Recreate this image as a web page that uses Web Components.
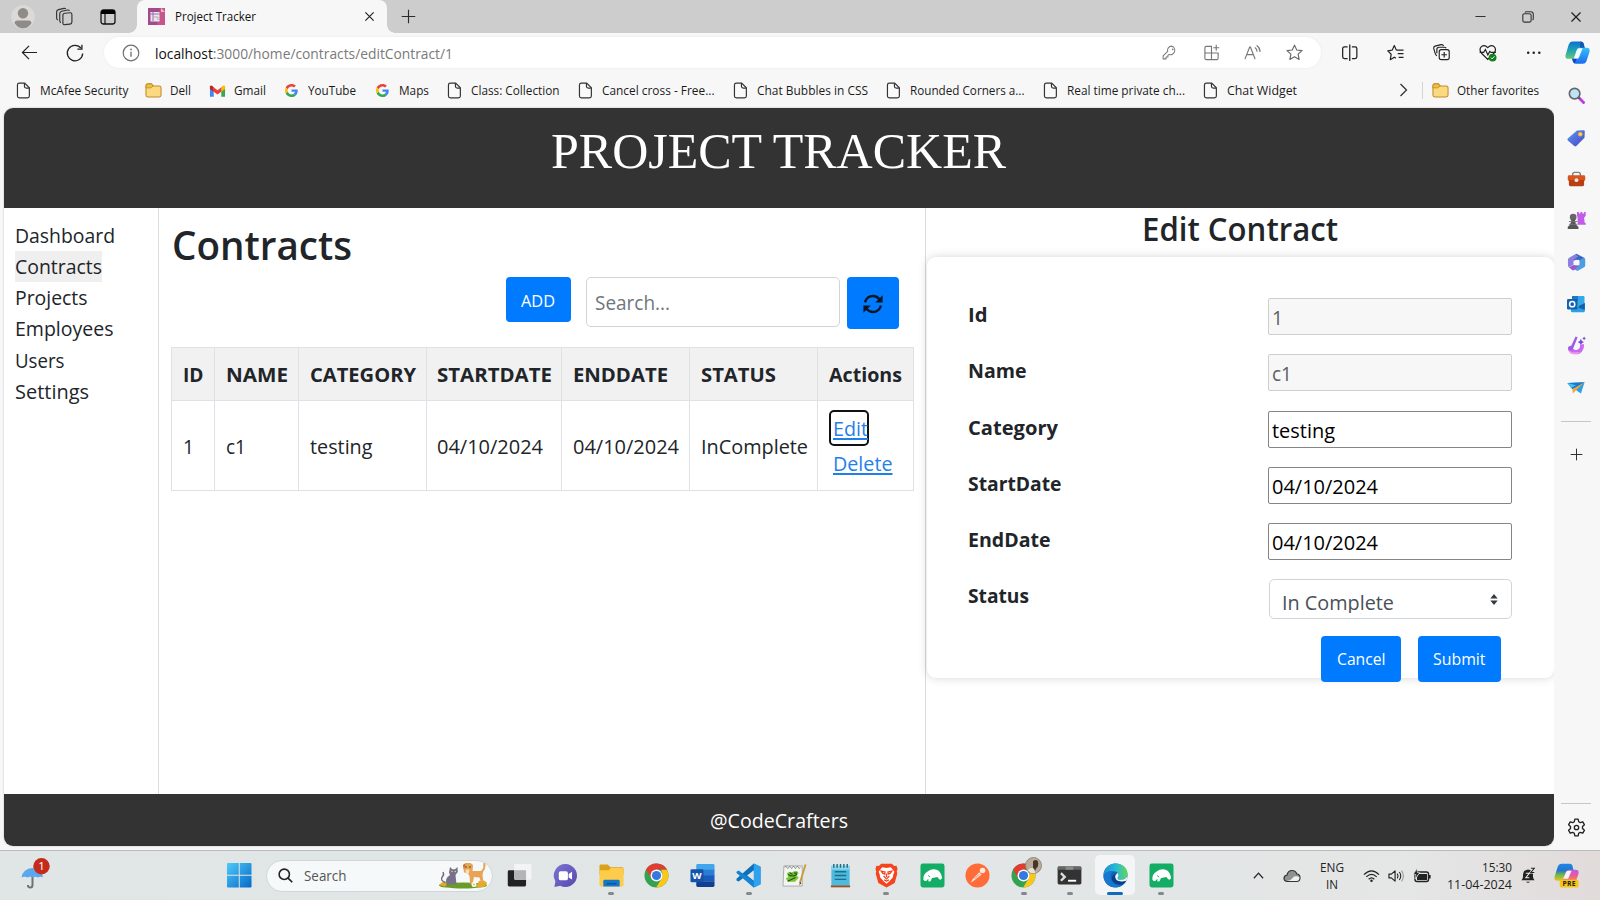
<!DOCTYPE html>
<html lang="en">
<head>
<meta charset="utf-8">
<title>Project Tracker</title>
<style>
html,body{margin:0;padding:0}
body{width:1600px;height:900px;overflow:hidden;background:#f7f7f7;font-family:"Open Sans","Noto Sans",sans-serif;color:#212529}
</style>
</head>
<body>
<desktop-window></desktop-window>
<script>
const ICONS={
avatar:['0 0 24 24','<circle cx="12" cy="12" r="11.8" fill="#dcdad7"/><circle cx="12" cy="8.3" r="5.2" fill="#8f8b88"/><path d="M3.6 18.2q0-2.6 2.8-2.6h11.2q2.8 0 2.8 2.6-3 5-8.400 5t-8.400-5z" fill="#8f8b88"/>'],
stack:['0 0 20 20','<g fill="none" stroke="#333" stroke-width="1.200" stroke-linejoin="round"><rect x="8.300" y="6.500" width="9.500" height="12" rx="2" transform="skewY(-6) translate(0 1.200)"/><path d="M6.200 16.500Q5 16 5 14.500V7q0-2 2-2.500l6.500-1.300q1.300-.2 1.800.8"/><path d="M3 13.800Q1.700 13 1.700 11.500V5.300q0-2 2-2.500L9.500 1.500q1.300-.2 1.900.6"/></g>'],
panes:['0 0 18 18','<rect x="2" y="2" width="14" height="14" rx="2.500" fill="none" stroke="#111" stroke-width="1.300"/><path d="M2 4.500Q2 2 4.500 2h9Q16 2 16 4.500V6H2z" fill="#000"/><path d="M6 6v10" stroke="#111" stroke-width="1.200"/>'],
favicon:['0 0 17 17','<path d="M0 0h13l4 4v13H0z" fill="#a24a8c"/><path d="M12 0h5v17H9z" fill="#c8558a"/><path d="M13 0v4h4z" fill="#f0b5c8"/><rect x="2.500" y="4" width="9" height="9.500" fill="#ece4ee"/><path d="M2.500 6h9M5 4v9" stroke="#8b77a0"/><path d="M6 9h4v3" stroke="#aaa6ba" fill="none"/>'],
close:['0 0 12 12','<path d="M1.500 1.500l9 9M10.500 1.500l-9 9" stroke="#222" stroke-width="1.300" fill="none"/>'],
plus:['0 0 16 16','<path d="M8 .8v14.400M.8 8h14.400" stroke="#2b2b2b" stroke-width="1.200"/>'],
min:['0 0 12 12','<path d="M.5 6h11" stroke="#333" stroke-width="1.100"/>'],
restore:['0 0 12 12','<rect x=".8" y="2.800" width="8.300" height="8.300" rx="1.500" fill="none" stroke="#333" stroke-width="1.100"/><path d="M3 1.500Q3.500.7 4.500.7h4.200q2.600 0 2.600 2.600v4.200q0 1-.8 1.500" fill="none" stroke="#333" stroke-width="1.100"/>'],
back:['0 0 18 18','<path d="M17 9H1.500M8.500 2 1.500 9l7 7" fill="none" stroke="#222" stroke-width="1.300"/>'],
reload:['0 0 18 18','<path d="M16.700 9.500A7.700 7.700 0 1 1 15 4.200" fill="none" stroke="#222" stroke-width="1.300"/><path d="M15.900.8v4.400h-4.500" fill="none" stroke="#222" stroke-width="1.300"/>'],
info:['0 0 18 18','<circle cx="9" cy="9" r="7.800" fill="none" stroke="#6f6f6f" stroke-width="1.200"/><path d="M9 7.700v5" stroke="#6f6f6f" stroke-width="1.300"/><circle cx="9" cy="5.400" r=".9" fill="#6f6f6f"/>'],
key:['0 0 16 16','<path d="M10.300 1.200a4.500 4.500 0 0 0-4.300 5.700L1.200 11.700v3.100h3.100v-2h2v-2l1.200-.6a4.600 4.600 0 1 0 2.800-9z" fill="none" stroke="#7d7d7d" stroke-width="1.150" stroke-linejoin="round"/><circle cx="11.400" cy="4.600" r="1" fill="#7d7d7d"/>'],
apps:['0 0 18 18','<g fill="none" stroke="#777" stroke-width="1.200"><path d="M9.500 2.500H3.500Q2 2.500 2 4v11q0 1.500 1.500 1.500h11q1.500 0 1.500-1.500V9.500H2M9 2.500v14M14 .8v6.400M10.800 4h6.400"/></g>'],
aloud:['0 0 18 18','<g fill="none" stroke="#777" stroke-width="1.250" stroke-linecap="round"><path d="M1.200 15.500 6 3.200h.8l4.800 12.300M3 11.200h6.800"/><path d="M11.800 4q1.800 1.300 2 3.700M13.800 1.800q3 2 3.200 6"/></g>'],
star:['0 0 18 18','<path d="M9 1.200l2.350 5.100 5.600.7-4.150 3.800 1.100 5.500L9 13.600l-4.900 2.700 1.100-5.500L1.050 7l5.600-.7z" fill="none" stroke="#666" stroke-width="1.200" stroke-linejoin="round"/>'],
split:['0 0 18 18','<g fill="none" stroke="#222" stroke-width="1.300"><path d="M6.800 3H3.500Q1.700 3 1.700 4.800v8.400Q1.700 15 3.500 15h3.300M11.200 3h3.300q1.800 0 1.800 1.800v8.400q0 1.800-1.800 1.800h-3.300M9 .6v16.800"/></g>'],
favs:['0 0 18 18','<g fill="none" stroke="#222" stroke-width="1.250" stroke-linejoin="round"><path d="M9.600 6.300 7.500 1.600 5.400 6.300.8 7l3.500 3.500-.9 5.600 4.100-2.500 1.700.9M9.600 6.300H17M11 10h6M12 13.700h5"/></g>'],
coll:['0 0 18 18','<g fill="none" stroke="#222" stroke-width="1.250"><rect x="6.800" y="6.200" width="10.900" height="10.900" rx="2.300"/><path d="M12.200 8.700v6M9.200 11.700h6"/><path d="M4.300 12.800Q3 12.300 2.500 10.500L.8 5Q.3 3 2.200 2.300L8.800.7q2-.4 2.700 1.500M4.200 10V6q0-2.500 2.500-2.500h5.500q1.600 0 2.100 1.200"/></g>'],
heart:['0 0 18 18','<path d="M2.600 9.500Q-.3 5.800 2.200 3 5.500.2 9 3.800 12.500.2 15.800 3q2.500 2.800-.4 6.500L9 15.800z" fill="none" stroke="#222" stroke-width="1.200"/><path d="M.6 8.600h4.200l1.800-3 2.500 5.600 2-3.600 1.300 1h5" fill="#f7f7f7" stroke="#222" stroke-width="1.200"/><circle cx="14" cy="14" r="4" fill="#14801a"/><path d="M12.200 14l1.300 1.300 2.400-2.600" fill="none" stroke="#fff" stroke-width="1"/>'],
dots:['0 0 18 18','<g fill="#222"><circle cx="3.300" cy="9" r="1.300"/><circle cx="9" cy="9" r="1.300"/><circle cx="14.700" cy="9" r="1.300"/></g>'],
copilot:['0 0 26 26','<defs><linearGradient id="a" x1="0" y1="0" x2="0" y2="1"><stop offset="0" stop-color="#0f6fd0"/><stop offset=".45" stop-color="#1a9fb8"/><stop offset="1" stop-color="#5ecb78"/></linearGradient><linearGradient id="b" x1="0" y1="0" x2="0" y2="1"><stop offset="0" stop-color="#35c0f5"/><stop offset="1" stop-color="#1a6bf0"/></linearGradient></defs><path d="M8 1.500h8.500q2 0 2.700 2L20.500 8h-5q-2.300 0-3 2.400L10.400 17q-.8 2.600-3 2.600H3.500Q-.2 19.600.6 15.500L3.800 5Q5 1.500 8 1.500z" fill="url(#a)"/><path d="M15.500 8h7q3.900 0 3 4.300L22.300 22q-1 2.700-4 2.700h-7q-2.300 0-2.900-2l-1-3.100q2.300 0 3-2.600L12.500 10.400Q13.200 8 15.500 8z" fill="url(#b)"/><path d="M14.700 8.500h3.600l-3.600 9.300q-.5 1.600-2 1.600H9l3.300-9q.7-1.900 2.400-1.900z" fill="#f4fbff"/><path d="M16 1.500q2.500 0 3.200 2L20.500 8h-5z" fill="#1257b8"/><path d="M7.400 19.600h4.800l-2 4.800q-1.400-.3-1.800-1.700z" fill="#1646b8"/>'],
copilotPre:['0 0 26 26','<defs><linearGradient id="a" x1="0" y1="0" x2="0" y2="1"><stop offset="0" stop-color="#1c87e8"/><stop offset=".4" stop-color="#2675c8"/><stop offset=".65" stop-color="#6eb94e"/><stop offset="1" stop-color="#e8c21c"/></linearGradient><linearGradient id="b" x1="0" y1="0" x2="0" y2="1"><stop offset="0" stop-color="#b45ce8"/><stop offset=".5" stop-color="#ec5a9a"/><stop offset="1" stop-color="#f58a3c"/></linearGradient></defs><path d="M8 .8h8.500q2 0 2.700 2l1 4.500h-5L12 17q-.8 1.500-3 1.500H3.500Q-.2 18.500.6 14.400L3.800 4.200Q5 .8 8 .8z" fill="url(#a)"/><path d="M15.500 7h7q3.900 0 3 4.300L22.800 19H9l3.500-9.500Q13.200 7 15.500 7z" fill="url(#b)"/><path d="M14.700 8h3.600l-3.600 8.500H9.500l3-7Q13.200 8 14.700 8z" fill="#f6f3fb"/><rect x="6" y="17.300" width="19.500" height="8.200" rx="1.500" fill="#f8c514"/><text x="15.800" y="24" font-size="7" font-weight="700" font-family="Open Sans" text-anchor="middle" fill="#222" letter-spacing=".3">PRE</text>'],
doc:['0 0 16 18','<path d="M3.600 1.200h5.600l5 5v8.700q0 2-2 2H3.600q-2 0-2-2V3.200q0-2 2-2z" fill="#fafafa" stroke="#333" stroke-width="1.250"/><path d="M9 1.400v3q0 2 2 2h3" fill="none" stroke="#333" stroke-width="1.250"/>'],
folder:['0 0 18 18','<path d="M1 4Q1 2 3 2h3.700l2 2.200H15q2 0 2 2v7.600q0 2-2 2H3q-2 0-2-2z" fill="#fbd97e" stroke="#bf8d28" stroke-width="1.100"/><path d="M1 6.200h5.200l2.500-2L6.700 2H3Q1 2 1 4z" fill="#f3bd3d" stroke="#bf8d28" stroke-width=".9"/>'],
gmail:['0 0 18 18','<path d="M1 4.500V15q0 .7.800.7H5V8z" fill="#4285f4"/><path d="M17 4.500V15q0 .7-.8.700H13V8z" fill="#34a853"/><path d="M1 4.800v2.500l4 3V5.500L3.700 4.300Q1.600 2.900 1 4.800z" fill="#c5221f"/><path d="M17 4.800v2.500l-4 3V5.500l1.300-1.200q2.100-1.400 2.700.5z" fill="#fbbc04"/><path d="M5 5.500l4 3.200 4-3.200v4.800l-4 3-4-3z" fill="#ea4335"/>'],
google:['0 0 48 48','<path fill="#EA4335" d="M24 9.500c3.540 0 6.710 1.220 9.210 3.600l6.850-6.850C35.900 2.380 30.470 0 24 0 14.620 0 6.510 5.380 2.560 13.220l7.980 6.190C12.430 13.720 17.740 9.500 24 9.500z"/><path fill="#4285F4" d="M46.980 24.550c0-1.570-.15-3.090-.38-4.550H24v9.020h12.940c-.58 2.960-2.260 5.480-4.780 7.180l7.730 6c4.510-4.180 7.090-10.360 7.090-17.650z"/><path fill="#FBBC05" d="M10.530 28.590c-.48-1.450-.76-2.990-.76-4.590s.27-3.140.76-4.590l-7.980-6.190C.92 16.460 0 20.120 0 24c0 3.880.92 7.540 2.560 10.780l7.970-6.190z"/><path fill="#34A853" d="M24 48c6.480 0 11.930-2.130 15.890-5.810l-7.730-6c-2.150 1.450-4.920 2.300-8.160 2.300-6.260 0-11.570-4.220-13.470-9.910l-7.980 6.190C6.510 42.620 14.620 48 24 48z"/>'],
chev:['0 0 14 14','<path d="M4.500 1l6 6-6 6" fill="none" stroke="#333" stroke-width="1.300"/>'],
up:['0 0 12 12','<path d="M1 9l5-5.500L11 9" fill="none" stroke="#222" stroke-width="1.300"/>'],
mag:['0 0 18 18','<path d="M11.500 11.500l5 5" stroke="#c03ce0" stroke-width="3" stroke-linecap="round"/><path d="M10 10l2.300 2.300" stroke="#555" stroke-width="2"/><circle cx="7" cy="7" r="5.600" fill="#bfe3f6" stroke="#666" stroke-width="1.700"/>'],
tag:['0 0 18 18','<defs><linearGradient id="t" x1="0" y1="0" x2="1" y2="1"><stop offset="0" stop-color="#5f94f5"/><stop offset="1" stop-color="#4547c4"/></linearGradient></defs><path d="M10 1.500l6.500-.3q1.300 0 1.300 1.300l-.3 6.300-8.200 8.200q-1 .9-2 0L.8 11.500q-.9-1 0-2z" fill="url(#t)"/><circle cx="13.300" cy="5.200" r="2" fill="#f6d84e" stroke="#e2a72c" stroke-width=".7"/>'],
case:['0 0 20 18','<path d="M6 6V4q0-2 2-2h4q2 0 2 2v2" fill="none" stroke="#7a7f84" stroke-width="1.500"/><rect x=".8" y="5" width="18.400" height="6" rx="1.500" fill="#d9541e"/><path d="M2 10h16v5q0 1.500-1.500 1.500h-13Q2 16.500 2 15z" fill="#b83f12"/><circle cx="10" cy="10.200" r="2" fill="#e8e8e8"/>'],
chess:['0 0 20 20','<circle cx="6.500" cy="6.500" r="3.500" fill="#666"/><path d="M4.700 9h3.600l1.200 5.500 2.500 2V19H.8v-2.500l2.600-2z" fill="#555"/><path d="M2 11h9M2 14h9" stroke="#777"/><path d="M10.500 1h2v1.500h1.700V1h2v1.500H18V1h1.700v4l-1.700 2 .5 5 1.200 1v1.500h-8.500V6.500l-.7-1.500z" fill="#c35be8"/>'],
m365:['0 0 20 20','<path d="M10 .8 18 5v5.500l-6-3.500-4 1.500L2.200 5.500z" fill="#3768c8"/><path d="M2 5.300 8.500 1.500 12 3.500 7 7v5L2 15q-1-.6-1-2V7q0-1.200 1-1.700z" fill="#8b7fe0"/><path d="M18 5q1.200.6 1.200 2v6q0 1.400-1.200 2l-7 4-4.500-2.500L13 13V7.500z" fill="#4d9ee0"/><path d="M2 15l5-2.500 6 .5-5.500 5q-1 .8-2 0z" fill="#9a59c8"/><circle cx="10" cy="10" r="3" fill="#f7f7f7"/>'],
outlook:['0 0 18 18','<rect x="5" y="1" width="12.500" height="10" rx="1" fill="#35a8e8"/><path d="M5 1h6v5H5z" fill="#1b78c4"/><path d="M4 8l7 4.500L17.800 8v8q0 1.200-1.200 1.200H5q-1 0-1-1z" fill="#2ba0ea"/><path d="M10 12l7.800-4v7z" fill="#155fa6"/><rect x="0" y="4" width="10.500" height="10.500" rx="1.200" fill="#0f64b2"/><circle cx="5.200" cy="9.200" r="2.600" fill="none" stroke="#fff" stroke-width="1.500"/>'],
design:['0 0 20 20','<path d="M1.500 11q-1.500 4.500 2.500 7 4.500 2.500 9.500.3Q18.500 15 17.800 8.500l-4 .8q.3 4-3 5.200-3 .8-4-1z" fill="#c968f0"/><path d="M9 17q-4 1-7-2 .3 4 5 4.300 5 .2 8-3-2.500 1.300-6 .7z" fill="#ef9ae8"/><path d="M9 .5l2.200.8-5 12.500q-1.500 2-3.700 1-1.900-1.500-.7-3.300 1-1.500 2.700-1.300z" fill="#9a5cea"/><path d="M14.500 3l1.200 2.200 2.200 1.100-2.200 1.200-1.200 2.100-1.100-2.100-2.100-1.200 2.200-1.100zM18 .5l.7 1.300 1.300.7-1.300.7-.7 1.300-.7-1.300-1.300-.7 1.300-.7z" fill="#7a48d8"/>'],
drop:['0 0 20 18','<path d="M.5 3.500 19.500 2.500 15.500 15 9.500 11z" fill="#2aa1e6"/><path d="M.5 3.500 19.500 2.500 6 10.500z" fill="#1a78cc"/><path d="M19.500 2.500 6 10.500 6.500 15 10 11.500z" fill="#f3a536"/><path d="M.5 3.500 10 6 4.500 9z" fill="#46c0ee"/>'],
gear:['0 0 20 20','<path d="M8.300 1.200h3.400l.6 2.700 1.700 1 2.600-.9 1.700 3-2 1.900v2.200l2 1.900-1.700 3-2.600-.9-1.700 1-.6 2.700H8.300l-.6-2.700-1.700-1-2.600.9-1.700-3 2-1.900V8.900l-2-1.900 1.700-3 2.600.9 1.700-1z" fill="none" stroke="#222" stroke-width="1.400" stroke-linejoin="round"/><circle cx="10" cy="10" r="2.300" fill="none" stroke="#222" stroke-width="1.400"/>'],
sync:['0 0 20 20','<g fill="none" stroke="#0b1622" stroke-width="2.300"><path d="M2 8.300Q4 2 10 2q4.200 0 7 4"/><path d="M18 11.700Q16 18 10 18q-4.200 0-7-4"/></g><path d="M19.600 1.200v7.300h-7.300zM.4 18.800v-7.300h7.300z" fill="#0b1622"/>'],
sort:['0 0 8 12','<path d="M4 0l4 5H0zM4 12l4-5H0z" fill="#343a40"/>'],
umbrella:['0 0 28 32','<path d="M11.500 12v15q0 2.500-2.300 2.500T7 27" fill="none" stroke="#6d7275" stroke-width="2"/><path d="M.5 19.500Q2 10.500 11.500 10q9 .5 10.500 9.500-2.500-1.500-5 0-2.500-1.500-5.300 0-2.700-1.500-5 0-3-1.500-6.200 0z" fill="#5aa9ee"/><circle cx="20.500" cy="8.300" r="8.200" fill="#c42b1c"/><text x="20.500" y="12.400" font-size="11.500" font-family="Open Sans" text-anchor="middle" fill="#fff">1</text>'],
windows:['0 0 25 25','<defs><linearGradient id="w" x1="0" y1="0" x2="1" y2="1"><stop offset="0" stop-color="#4fcaf8"/><stop offset="1" stop-color="#0668c8"/></linearGradient></defs><path d="M1 0h11v12H0V1q0-1 1-1zM13 0h11q1 0 1 1v11H13zM0 13h12v12H1q-1 0-1-1zM13 13h12v11q0 1-1 1H13z" fill="url(#w)"/>'],
search:['0 0 16 16','<circle cx="6.700" cy="6.700" r="5.500" fill="none" stroke="#222" stroke-width="1.700"/><path d="M10.700 10.700l4.500 4.500" stroke="#222" stroke-width="1.800"/>'],
pets:['0 0 50 27','<ellipse cx="25" cy="23.500" rx="24" ry="3" fill="#6a9a28"/><path d="M1 23q4-5 9-2.500l-3 4zM41 19q7-2 8 3l-3 3h-8z" fill="#e5ab22"/><path d="M7.500 20.500Q1.500 18.500 4.500 14.500 6.500 13 5 10" fill="none" stroke="#6f6b80" stroke-width="1.400"/><path d="M12 5l2.300 2.200h2.700L19.500 5l.3 5-2.300 3 1 9.500H8.500q-2-6.500 3.500-9.500l-1-2.500z" fill="#77728a"/><circle cx="14" cy="9.500" r=".7" fill="#e5e86a"/><circle cx="17.300" cy="9.500" r=".7" fill="#e5e86a"/><path d="M25 3l2.500-2h5l2.500 2-.5 6H43l2.300-3V2q-.2-1 .8-1.300 1.500.3 1.500 2.300 0 4-2.600 7l-.5 3.500 1.300 8.500h-2.300l-2-6.500-5.500-.5-1.500 7h-2.300l-.7-8-2-3-3.500-.5z" fill="#e8a354"/><path d="M27.500 7.500h4l-.5 4h-3z" fill="#f6dcb8"/><circle cx="28" cy="5" r=".7" fill="#332"/><circle cx="32" cy="5" r=".7" fill="#332"/><path d="M25 3l2.500-1.500-1.500 6z" fill="#b86f30"/><circle cx="36" cy="22.500" r="2.500" fill="#fff"/><circle cx="36" cy="22.500" r=".9" fill="#eeb92e"/>'],
taskview:['0 0 26 26','<rect x=".8" y="7.500" width="19" height="17" rx="1.500" fill="#222"/><rect x="7.500" y="1" width="18" height="16.500" rx="1.500" fill="#f5f5f5" opacity=".92"/><path d="M7.500 7.500h12.300v10H9q-1.500 0-1.500-1.500z" fill="#b4b5b6"/>'],
chat:['0 0 26 26','<defs><linearGradient id="c" x1="0" y1="0" x2="1" y2="1"><stop offset="0" stop-color="#7a74d4"/><stop offset="1" stop-color="#5747ae"/></linearGradient></defs><path d="M13 1a12 12 0 1 1-5.500 22.700L1.500 25l1-6A12 12 0 0 1 13 1z" fill="url(#c)"/><rect x="6" y="8.500" width="9.500" height="9.500" rx="2" fill="#fff"/><path d="M16.300 11.500l3.500-2.300v8l-3.500-2.200z" fill="#fff"/>'],
explorer:['0 0 26 26','<path d="M.5 3q0-1.500 1.500-1.500h7L12 4.500H24q1.500 0 1.500 1.500v6H.5z" fill="#dba118"/><path d="M.5 7.500H10l2.500-2.300H24q1.500 0 1.500 1.300V23q0 1.500-1.500 1.500H2Q.5 24.500.5 23z" fill="#fdcc4a"/><path d="M4.500 24.500V19q0-1.500 1.500-1.500h14q1.500 0 1.500 1.500v5.500z" fill="#1477c8"/><path d="M8 21.500h10" stroke="#0b5596" stroke-width="1.500"/>'],
chrome:['0 0 26 26','<circle cx="13" cy="13" r="12.500" fill="#35a252"/><path d="M13 .5A12.500 12.500 0 0 1 23.900 7H13L7.700 16.100 2.200 6.700A12.500 12.500 0 0 1 13 .5z" fill="#df3d31"/><path d="M23.900 7A12.500 12.500 0 0 1 12.600 25.500L18.300 16Q20.200 12 18 7z" fill="#fbc71b"/><circle cx="13" cy="13" r="6.200" fill="#fff"/><circle cx="13" cy="13" r="4.800" fill="#3678e0"/>'],
word:['0 0 26 26','<path d="M8 1h16q1.500 0 1.500 1.500V7.500h-19V2.500Q6.500 1 8 1z" fill="#41a5ee"/><path d="M6.500 7h19v6.500h-19z" fill="#2b7cd3"/><path d="M6.500 13h19v6h-19z" fill="#185abd"/><path d="M6.500 19h19v4.500q0 1.500-1.500 1.500H8q-1.500 0-1.500-1.500z" fill="#103f91"/><rect x=".5" y="6.500" width="13.500" height="13.500" rx="1.300" fill="#1553a8"/><text x="7.200" y="17" text-anchor="middle" font-family="Open Sans" font-weight="700" font-size="10" fill="#fff">W</text>'],
vscode:['0 0 26 26','<path d="M18.500.5 25.500 4v18l-7 3.500L7.800 15.300l-5 3.900L.5 18.100v-1.600L18.500.5z" fill="#0a72bd"/><path d="M.5 9.200l2.300-1.400L18.500 19.500v6L.5 10.500z" fill="#1584d4"/><path d="M18.500.5l7 3.500v18l-7 3.500z" fill="#2da2f0"/><path d="M18.500 7.500v11L11.500 13z" fill="#e0e4e4"/>'],
npp:['0 0 26 26','<path d="M2 3h19v21H1z" fill="#f4f4f0" stroke="#999" stroke-width=".8"/><path d="M3 4.500q1-2.500 2 0t2 0 2 0 2 0 2 0 2 0 2 0 2 0" fill="none" stroke="#777" stroke-width=".9"/><path d="M5 11q2-2.500 5-1 4-3 7-.5.5 2-2 3.500l2.500 2-4 4.500H6l-2-3.500q2-1 2.500-2z" fill="#77c73a"/><path d="M6.500 12q4 3 9 0M6 19l8-4M8 10l3 2M12.500 10.500h3" stroke="#244c16" stroke-width="1.100" fill="none"/><path d="M24.500 1.500L18.500 21" stroke="#c99a3a" stroke-width="1.900"/><path d="M18.800 20l-.8 3.500 2.200-2.800z" fill="#333"/>'],
notepad:['0 0 26 26','<path d="M3.500 3h19v20.500h-19z" fill="#4dbbdf"/><path d="M3.500 3h19v4h-19z" fill="#86d7ee"/><path d="M6 1v4M9.500 1v4M13 1v4M16.500 1v4M20 1v4" stroke="#246b84" stroke-width="1.500"/><path d="M7 9h12M7 13h12M7 17h12" stroke="#1f6d8a" stroke-width="1.500"/><path d="M3 24.300h20" stroke="#99501f" stroke-width="2"/>'],
brave:['0 0 26 26','<path d="M7.500.7h11l2.500 2.500 2.500-.3 1 3.500-.8 2.300.5 2.500-2.700 9.500L13 25.500l-8.500-4.800L1.800 11.200l.5-2.500-.8-2.300 1-3.500 2.500.3z" fill="#f4451e"/><path d="M8.500 4.500 13 5.300l4.500-.8 3.700 4.500-1 2.500-.7 3.500L16 19l-3 2.500L10 19l-3.500-4-.7-3.500-1-2.500z" fill="#fff"/><path d="M7.500 8.500l4 .9-.3 2.200-2-.8zM18.500 8.500l-4 .9.300 2.200 2-.8zM13 11v3.500M10 13.500l3 3 3-3M10.500 17.500l2.500 1.300 2.500-1.300" fill="none" stroke="#f4451e" stroke-width="1.300"/>'],
boar:['0 0 26 26','<rect x=".5" y=".5" width="25" height="25" rx="2.500" fill="#14ad66"/><path d="M3.500 17.500q-.5-6 4-8.500 5.500-4 11-1.500 3.500 2 4.500 8l-1.500 2-1.500-.5-2-2.500-2.500.5-3 .5-1.500 3.500-2.300.2v-2.700l-2.200 2.200H5z" fill="#fff"/><path d="M8.500 13l2 1.500" stroke="#14ad66"/>'],
postman:['0 0 26 26','<circle cx="13" cy="13" r="12.500" fill="#ff6c37"/><path d="M6.300 20.500l1-2.700 7.500-8.200 2.500 2.400-8.200 6.500z" fill="#fbe7df"/><path d="M15 11.500l-5 5" stroke="#ff6c37" stroke-width=".8"/><circle cx="18.300" cy="7.800" r="2.900" fill="#fbe7df"/>'],
face:['0 0 17 17','<circle cx="8.500" cy="8.500" r="8" fill="#b9ac99" stroke="#84796e" stroke-width=".8"/><path d="M8 4.500q1-2 3-1.500 2.500.5 2.300 4-.3 3.500-2 4.300L10 14H8z" fill="#4a332a"/><path d="M2.500 13.500Q5 10 9 11.500l1.500 4.500q-5 1-8-2.500z" fill="#e4e0da"/>'],
terminal:['0 0 26 20','<rect x=".5" y=".5" width="25" height="19" rx="1.500" fill="#333"/><path d="M.5 2q0-1.500 1.500-1.500h22q1.500 0 1.500 1.500v2H.5z" fill="#666"/><path d="M9 .5h8V4H9z" fill="#8a8a8a"/><path d="M4 7.500l4 4-4 4" fill="none" stroke="#ddd" stroke-width="2.500"/><path d="M11.500 15.500h8.500" stroke="#fff" stroke-width="2"/>'],
edge:['0 0 26 26','<defs><linearGradient id="e" x1="0" y1=".3" x2="1" y2=".3"><stop offset="0" stop-color="#1b8fd4"/><stop offset=".5" stop-color="#27b8d8"/><stop offset="1" stop-color="#5fd858"/></linearGradient></defs><circle cx="13" cy="13" r="12.500" fill="#0f62b8"/><path d="M.5 13A12.500 12.500 0 0 1 13 .5c7.500 0 12.500 5 12.500 10.500 0 4-3 6.500-6.500 6.500-3 0-4.500-1.300-3.500-2.800 1.500-2.500 0-6.200-4.500-6.200C6 8.500 1.500 10.500.5 13z" fill="url(#e)"/><path d="M11 8.500c-3 2-4.200 6-2 10 2.200 3.500 6.500 5 12 3.300A12.500 12.500 0 0 1 9 24.800C3 23 0 17 .7 13 2 9.500 7 8 11 8.500z" fill="#1678cc"/><path d="M12.500 12c-.5 4 2.500 7.500 7 7.500 2 0 3.500-.5 4.800-1.200-1 2-2.500 3.300-4 4-5 1.200-9.300-.7-10.800-4.300-1-2.800.5-5.500 3-6z" fill="#0b3f8c"/><path d="M14.800 10.500q2.200 1.700.7 4.200c-1 1.500.5 2.800 3.500 2.800 3 0 5.300-1.500 6.200-4v3l-1 2c-6 1.500-11.700.5-11.500-5z" fill="#f2f5f6"/>'],
cloud:['0 0 18 14','<path d="M4.500 12.500Q1 12.300 1 9.300q0-2.800 3-3.300Q5 1.500 9 1.500q3.800 0 4.800 3.500 3.200.2 3.200 3.800t-3.500 3.700z" fill="#8f9293" stroke="#333" stroke-width="1.200"/><path d="M4 12q4-.5 7-4.500 4-1 5.500 1-.2 3.500-3 3.500z" fill="#eef0f0"/>'],
wifi:['0 0 18 14','<g fill="none" stroke="#222" stroke-width="1.250"><path d="M1 5.500q8-8 16 0M3.500 8q5.500-5.500 11 0M6 10.400q3-3 6 0"/></g><circle cx="9" cy="12" r="1.300" fill="#222"/>'],
sound:['0 0 18 14','<path d="M1 5h2.500L7.500 1.500v11L3.500 9H1z" fill="none" stroke="#222" stroke-width="1.200" stroke-linejoin="round"/><g fill="none" stroke="#222" stroke-width="1.100"><path d="M9.800 4.500q1.700 2.500 0 5M12 2.800q3 4.200 0 8.400"/><path d="M14.300 1.300q4 5.700 0 11.400" stroke="#999"/></g>'],
battery:['0 0 18 14','<rect x="2" y="3" width="13.500" height="9.500" rx="2" fill="none" stroke="#222" stroke-width="1.400"/><path d="M4 8l2-3h8v6H4z" fill="#222"/><path d="M16.800 6v3.500" stroke="#222" stroke-width="1.600"/><path d="M4-.5.3 5.500H3L2 10l4.700-6.500H4.300z" fill="#222" stroke="#e6e8e8" stroke-width=".6"/>'],
bell:['0 0 16 18','<path d="M.5 14.500q1.800-2 1.800-4V7.500Q3 2.500 8 2q5 .5 5.700 5.500v3q0 2 1.800 4z" fill="#222"/><path d="M5.500 16q2.500 2.500 5 0z" fill="#222"/><path d="M5.500 6.500h4l-4 5h4" fill="none" stroke="#eee" stroke-width="1.200"/><path d="M11.300.8h3.900l-3.900 4.700h3.900" fill="none" stroke="#e6e6e6" stroke-width="2.600"/><path d="M11.300.8h3.900l-3.900 4.700h3.900" fill="none" stroke="#222" stroke-width="1.200"/>']
};
const T=(t,w,c='')=>`<fit-text w="${w}" class="${c}">${t}</fit-text>`;
const I=(n,w,h=w)=>`<ui-icon name="${n}" w="${w}" h="${h}"></ui-icon>`;
const part=(name,css,html)=>customElements.define(name,class extends HTMLElement{
  constructor(){super();this.attachShadow({mode:'open'}).innerHTML=`<style>*{box-sizing:border-box}${css}</style>${html}`}
});

customElements.define('ui-icon',class extends HTMLElement{
  connectedCallback(){
    if(this.shadowRoot)return;
    const [box,art]=ICONS[this.getAttribute('name')],w=this.getAttribute('w'),h=this.getAttribute('h');
    this.attachShadow({mode:'open'}).innerHTML=`<style>:host{display:block;flex:none;width:${w}px;height:${h}px}svg{display:block;overflow:visible}</style><svg width="${w}" height="${h}" viewBox="${box}">${art}</svg>`;
  }
});

part('desktop-window',`:host{display:grid;width:1600px;height:900px;grid-template:33px 40px 35px 742px 50px/1554px 46px}
 tab-strip,tool-bar,task-bar{grid-column:1/3}book-marks{grid-column:1;grid-row:3}
 edge-rail{grid-column:2;grid-row:3/5}tracker-page{grid-column:1;grid-row:4}task-bar{grid-row:5}`,
 `<tab-strip></tab-strip><tool-bar></tool-bar><book-marks></book-marks><tracker-page></tracker-page><edge-rail></edge-rail><task-bar></task-bar>`);

part('tab-strip',`:host{display:flex;background:#cdcdcd;padding-left:2px;font-size:12px;color:#111}
 .c{width:42.600px;display:flex;align-items:center;justify-content:center}
 .k{padding-right:3px}
 .tab{position:relative;width:250px;margin-left:7.200px;background:#f7f7f7;border-radius:8px 8px 0 0;display:flex;align-items:center;padding:0 11.500px 0 11px}
 .tab:before,.tab:after{content:"";position:absolute;bottom:0;width:8px;height:8px;background:radial-gradient(circle at 0 0,transparent 7.500px,#f7f7f7 8px)}
 .tab:before{left:-8px}.tab:after{right:-8px;transform:scaleX(-1)}
 .tab fit-text{margin-left:10.500px}.tab ui-icon:last-child{margin-left:auto}.s{flex:1}.w{width:48px}`,
 `<div class="c">${I('avatar',24)}</div><div class="c k">${I('stack',19)}</div><div class="c">${I('panes',18)}</div>
 <div class="tab">${I('favicon',17)}${T('Project Tracker',81)}${I('close',11)}</div><div class="c">${I('plus',15)}</div><div class="s"></div>
 <div class="c w">${I('min',11)}</div><div class="c w">${I('restore',12)}</div><div class="c w">${I('close',12)}</div>`);

part('tool-bar',`:host{display:flex;align-items:center;background:#f7f7f7;padding:0 0 1px 6px;color:#7a7a7a}
 .c{width:46px;display:flex;justify-content:center}.pill{width:1217px;height:31px;margin:0 5.500px 0 6px;background:#fff;border-radius:16px;display:flex;align-items:center;padding:0 5.500px 0 18px;box-shadow:0 0 3px #0000000f}
 .pill>ui-icon{margin-right:15px}.p{width:41.700px}.s{flex:1}b{font-weight:400;color:#111}fit-text{font-size:15px}.e{width:42px}`,
 `<div class="c">${I('back',17)}</div><div class="c">${I('reload',18)}</div>
 <div class="pill">${I('info',18)}<fit-text w="298"><b>localhost</b>:3000/home/contracts/editContract/1</fit-text><div class="s"></div>
 ${['key','apps','aloud','star'].map((n,i)=>`<div class="c p">${I(n,i?17:15)}</div>`).join('')}</div>
 ${['split','favs','coll','heart','dots'].map(n=>`<div class="c">${I(n,n=='coll'?16.5:17.5)}</div>`).join('')}<div class="c e">${I('copilot',25)}</div>`);

part('book-mark',`:host{display:flex;align-items:center;gap:8px}`,`<slot></slot>`);
part('book-marks',`:host{display:flex;align-items:center;padding:0 15px 1px 14.500px;gap:17.400px;font-size:12px;color:#1b1b1b;background:#f7f7f7}
 .s{flex:1}.d{width:1px;height:17px;background:#d5d5d5;margin:0 -8px 0 -6px}.g{width:17px;padding-left:2px}`,
 [['doc','McAfee Security',88.5],['folder','Dell',21],['gmail','Gmail',32],['google','YouTube',48],['google','Maps',30],['doc','Class: Collection',88.5],['doc','Cancel cross - Free...',112.5],['doc','Chat Bubbles in CSS',111],['doc','Rounded Corners a...',114.5],['doc','Real time private ch...',118],['doc','Chat Widget',70]]
 .map(([i,t,w])=>`<book-mark>${i=='google'?`<span class="g">${I(i,13)}</span>`:I(i,17)}${T(t,w)}</book-mark>`).join('')
 +`<div class="s"></div>${I('chev',14)}<div class="d"></div><book-mark>${I('folder',17)}${T('Other favorites',82)}</book-mark>`);

part('edge-rail',`:host{display:flex;flex-direction:column;align-items:center;background:#f7f7f7;padding:2px 1.500px 0 0}
 .c{height:41.700px;display:flex;align-items:center}.l{width:30px;height:1px;background:#c6c6c6}.s{flex:1}.m{margin-top:12.500px}.n{margin-top:12px}.z{height:46px}`,
 [['mag',17],['tag',18],['case',19],['chess',19],['m365',19],['outlook',18],['design',19],['drop',18]].map(([n,w])=>`<div class="c">${I(n,w,n=='case'?18:w)}</div>`).join('')
 +`<div class="l m"></div><div class="c n">${I('plus',13)}</div><div class="s"></div><div class="l"></div><div class="c z">${I('gear',19)}</div>`);

part('tracker-page',`:host{display:grid;margin:0 0 4px 4px;border-radius:9px;overflow:hidden;background:#fff;grid-template:99.500px 586.500px 52px/155px 767px 628px;font-size:20.500px;box-shadow:0 0 2px #0004}
 header,footer{grid-column:1/4;background:#333;color:#fff;display:flex;justify-content:center}
 header{font:50px/86px "Liberation Serif",serif;padding-right:1px}footer{align-items:center;font-size:20px}
 side-nav,contract-list{border-right:1px solid #dcdcdc}`,
 `<header>${T('PROJECT TRACKER',455)}</header><side-nav></side-nav><contract-list></contract-list><edit-contract></edit-contract><footer>${T('@CodeCrafters',138)}</footer>`);

part('side-nav',`:host{display:flex;flex-direction:column;align-items:flex-start;padding:12px 0 0 11.300px;line-height:31.300px;font-size:20.500px}.on{background:#efefef}`,
 [['Dashboard',100],['Contracts',87],['Projects',72.5],['Employees',98.5],['Users',49.5],['Settings',74]].map(([t,w])=>T(t,w,t=='Contracts'?'on':'')).join(''));

part('contract-list',`:host{display:block;padding:9px 11px 0 12.500px}
 h1{margin:0 0 10px;font-size:40.500px;font-weight:600;line-height:56px;height:50px}
 .bar{display:flex;justify-content:flex-end;padding-right:15px;height:70px}
 .btn{background:#007bff;color:#fff;border-radius:4px;display:flex;align-items:center;justify-content:center}
 .add{width:65px;height:45.500px;font-size:16.500px;margin-right:15px;padding-top:2px}
 .find{width:254px;height:50px;border:1px solid #ced4da;border-radius:5px;padding:0 8px;color:#6f767c;display:flex;align-items:center;margin-right:7.500px}
 .ref{width:52px;height:52px;padding-top:2px}
 .grid{display:grid;grid-template:53px 90px/43px 84px 127.500px 135.500px 128px 128px 95.500px;border:solid #dee2e6;border-width:1px 0 0 1px;width:742.500px;margin-left:-.5px}
 .grid>*{border:solid #dee2e6;border-width:0 1px 1px 0;padding-left:10.500px;display:flex;align-items:center}
 .h{background:#f1f1f1;font-weight:700;font-size:20px;padding-top:1px}.r{padding-top:1px}
 .act{flex-direction:column;align-items:flex-start;justify-content:flex-start;padding:9.500px 0 0 10.500px;color:#1f80ec;line-height:34px}
 .act div{width:40px;height:36px;border:2px solid #111;border-radius:5px;padding-left:2px;line-height:33px}.u{text-decoration:underline;text-decoration-thickness:1.500px;text-underline-offset:2px}
 .act>fit-text{margin-left:4px}`,
 `<h1>${T('Contracts',180)}</h1><div class="bar"><div class="btn add">${T('ADD',34)}</div><div class="find">${T('Search...',75)}</div><div class="btn ref">${I('sync',20)}</div></div>
 <div class="grid">${[['ID',20.5],['NAME',62],['CATEGORY',106],['STARTDATE',115],['ENDDATE',95],['STATUS',75],['Actions',73]].map(([t,w])=>`<div class="h">${T(t,w)}</div>`).join('')}
 ${[['1',11],['c1',20],['testing',62.5],['04/10/2024',106],['04/10/2024',106],['InComplete',107]].map(([t,w])=>`<div class="r">${T(t,w)}</div>`).join('')}
 <div class="act"><div>${T('Edit',35,'u')}</div>${T('Delete',59.5,'u')}</div></div>`);

part('form-row',`:host{display:flex;justify-content:space-between;height:56.300px}::slotted(.l){font-weight:700;font-size:20px;line-height:33px}
 .box{width:244px;height:37px;border:1px solid #858585;border-radius:2px;background:#fff;color:#000;padding:0 3px;line-height:36px}
 :host([off]) .box{border-color:#cfcfcf;background:#f7f7f7;color:#5e5e5e}
 :host([pick]) .box{width:243px;height:40px;border-color:#ced4da;border-radius:5px;color:#495057;padding:0 13px 0 12px;display:flex;align-items:center;justify-content:space-between}
 .v{display:block;height:100%}:host([pick]) .v{height:32.500px;overflow:hidden;align-self:flex-start;line-height:45.500px}
 .a{display:none}:host([pick]) .a{display:block}`,
 `<slot name="label"></slot><div class="box"><span class="v"><slot></slot></span><span class="a">${I('sort',8,11)}</span></div>`);

part('edit-contract',`:host{display:flex;flex-direction:column;padding-left:1px}
 h2{margin:0;height:49px;line-height:42px;font-size:32.500px;font-weight:600;display:flex;justify-content:center;padding-right:1px}
 .card{height:421px;width:627px;border-radius:9px;background:#fff;box-shadow:0 0 10px #0000002b;padding:41.500px 42px 0 41px}
 .b{display:flex;justify-content:flex-end;gap:16.500px;padding:.300px 11px 0 0;font-size:16px;color:#fff}
 .b div{background:#007bff;border-radius:4px;width:80px;height:45.500px;display:flex;align-items:center;justify-content:center}.b div+div{width:83.500px}`,
 `<h2>${T('Edit Contract',196)}</h2><div class="card">
 ${[['Id',19.5,'1',11,'off'],['Name',58.5,'c1',20,'off'],['Category',90,'testing',63,''],['StartDate',93.5,'04/10/2024',106,''],['EndDate',82.5,'04/10/2024',106,''],['Status',61,'In Complete',112,'pick']]
 .map(([l,lw,v,vw,a])=>`<form-row ${a}><fit-text slot="label" class="l" w="${lw}">${l}</fit-text>${T(v,vw)}</form-row>`).join('')}
 <div class="b"><div>${T('Cancel',48.5)}</div><div>${T('Submit',52.5)}</div></div></div>`);

part('task-item',`:host{position:relative;width:45.850px;height:49px;display:flex;align-items:center;justify-content:center;flex:none}
 :host([active]):before{content:"";position:absolute;left:3px;top:4px;width:40px;height:40px;border-radius:5px;background:#f3f5f6}
 :host([run]):after{content:"";position:absolute;bottom:5px;width:6px;height:3px;border-radius:2px;background:#85888a}
 :host([active]):after{width:16px;background:#0f6cbd}
 ::slotted(.f){position:absolute;left:24px;top:6px}::slotted(*){z-index:1}`,`<slot></slot>`);

part('task-bar',`:host{display:flex;align-items:center;border-top:1px solid #b9bcbd;background:linear-gradient(90deg,#e0e5e6,#e2e6e6 70%,#e5e6e6 88%,#e1dbda);color:#222}
 .wx{margin:0 178px 4px 21px}.find{margin:0 3.500px 0 14.500px;width:227px;height:32px;border-radius:16px;background:#f6f9f9;border:1px solid #d2d6d7;display:flex;align-items:center;padding:0 4px 0 11px;font-size:14px;color:#555}
 .find fit-text{margin-left:11px}.s{flex:1}.tray{display:flex;align-items:center;font-size:13.500px;line-height:16.500px;margin-right:21px}
 .up{margin-right:19px}.g{margin-right:8px}.lang{width:40px;display:flex;flex-direction:column;align-items:center;margin:0 11px}.time{width:66px;display:flex;flex-direction:column;align-items:flex-end;margin:0 9px 0 15px}.bell{margin-right:19px}`,
 `<div class="wx">${I('umbrella',28,32)}</div>${I('windows',24.5)}<div class="find">${I('search',15)}${T('Search',42.5)}<div class="s"></div>${I('pets',50,27)}</div>
 ${[['taskview',''],['chat',''],['explorer','run'],['chrome',''],['word',''],['vscode','run'],['npp',''],['notepad',''],['brave','run'],['boar',''],['postman',''],['chrome','run','face'],['terminal','run'],['edge','run active'],['boar','run']]
 .map(([n,a,f])=>`<task-item ${a}>${I(n,25,n=='terminal'?19:25)}${f?`<ui-icon class="f" name="face" w="17" h="17"></ui-icon>`:''}</task-item>`).join('')}
 <div class="s"></div><div class="tray"><div class="up">${I('up',11)}</div>${I('cloud',18,14)}<div class="lang">${T('ENG',24)}${T('IN',12)}</div><div class="g">${I('wifi',17,14)}</div><div class="g">${I('sound',17,14)}</div>${I('battery',18,14)}
 <div class="time">${T('15:30',30)}${T('11-04-2024',65)}</div><div class="bell">${I('bell',14,17)}</div>${I('copilotPre',25)}</div>`);

/* One line of text, condensed or stretched to the column width given in w. */
customElements.define('fit-text',class extends HTMLElement{
  connectedCallback(){
    if(this.shadowRoot)return;
    const w=+this.getAttribute('w');
    this.attachShadow({mode:'open'}).innerHTML=`<style>:host{display:block;flex:none;width:${w}px;white-space:nowrap}span{display:inline-block;transform-origin:0 50%;text-decoration:inherit}</style><span><slot></slot></span>`;
    const s=this.shadowRoot.querySelector('span');
    s.style.transform=`scaleX(${w/s.getBoundingClientRect().width})`;
  }
});
</script>
</body>
</html>
